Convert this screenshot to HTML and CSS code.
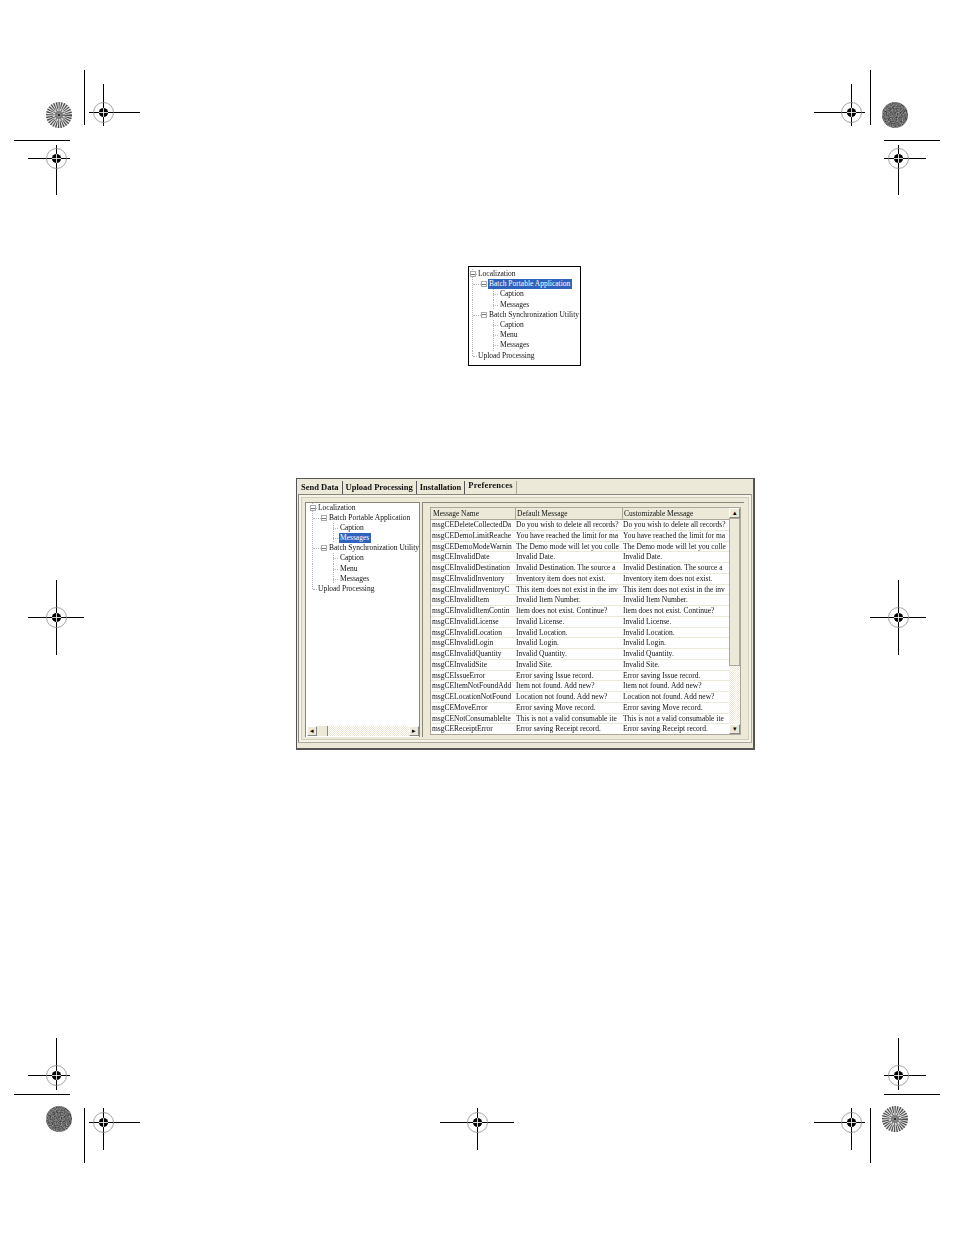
FILE: index.html
```html
<!DOCTYPE html>
<html lang="en">
<head>
<meta charset="utf-8">
<title>Localization preferences</title>
<link rel="stylesheet" href="styles.css">
</head>
<body>
<svg class="marks" width="954" height="1235" viewBox="0 0 954 1235" aria-hidden="true">
  <defs>
    <filter id="noise" x="0" y="0" width="100%" height="100%" color-interpolation-filters="sRGB">
      <feTurbulence type="fractalNoise" baseFrequency="0.8" numOctaves="2" seed="4"/>
      <feColorMatrix type="matrix" values="0.5 0.5 0 0 -0.08  0.5 0.5 0 0 -0.08  0.5 0.5 0 0 -0.08  0 0 0 0 1"/>
      <feComposite in2="SourceGraphic" operator="in"/>
    </filter>
    <g id="target">
      <circle r="10" fill="none" stroke="#8a8a8a" stroke-width="0.8"/>
      <circle r="4.6" fill="#000"/>
      <path d="M-4.6 0H4.6M0-4.6V4.6" stroke="#fff" stroke-width="0.8"/>
    </g>
    <g id="burst">
      <circle r="13" fill="#e2e2e2"/>
      <circle r="9.5" fill="none" stroke="#4a4a4a" stroke-width="7" stroke-dasharray="1.05 1.05"/>
      <circle r="4" fill="#8c8c8c"/>
      <circle r="4" fill="none" stroke="#666" stroke-width="4" stroke-dasharray="0.8 1.2"/>
      <circle r="1" fill="#111"/>
    </g>
    <g id="dark">
      <circle r="13" filter="url(#noise)" fill="#666"/>
    </g>
  </defs>
  <path class="line" d="M84.5 70V125M14 140.5H70M870.5 70V125M884 140.5H940M14 1094.5H70M84.5 1108V1163M884 1094.5H940M870.5 1108V1163"/>
  <path class="line" d="M89 112.5H140M103.5 84V126M28 158.5H70M56.5 145V195M814 112.5H865M851.5 84V126M884 158.5H926M898.5 145V195"/>
  <path class="line" d="M28 617.5H84M56.5 580V655M870 617.5H926M898.5 580V655"/>
  <path class="line" d="M28 1075.5H70M56.5 1038V1090M884 1075.5H926M898.5 1038V1090M89 1122.5H140M103.5 1108V1150M814 1122.5H865M851.5 1108V1150M440 1122.5H514M477.5 1108V1150"/>
  <use href="#target" x="103.5" y="112.5"/>
  <use href="#target" x="56.5" y="158.5"/>
  <use href="#target" x="851.5" y="112.5"/>
  <use href="#target" x="898.5" y="158.5"/>
  <use href="#target" x="56.5" y="617.5"/>
  <use href="#target" x="898.5" y="617.5"/>
  <use href="#target" x="56.5" y="1075.5"/>
  <use href="#target" x="898.5" y="1075.5"/>
  <use href="#target" x="103.5" y="1122.5"/>
  <use href="#target" x="851.5" y="1122.5"/>
  <use href="#target" x="477.5" y="1122.5"/>
  <use href="#burst" x="59" y="115"/>
  <use href="#dark" x="895" y="115"/>
  <use href="#dark" x="59" y="1119"/>
  <use href="#burst" x="895" y="1119"/>
</svg>

<main class="page">
  <figure class="tree-figure">
    <ul class="tree">
      <li class="l0 exp"><span>Localization</span></li>
      <li class="l1 exp"><span class="sel">Batch Portable Application</span></li>
      <li class="l2"><span>Caption</span></li>
      <li class="l2"><span>Messages</span></li>
      <li class="l1 exp"><span>Batch Synchronization Utility</span></li>
      <li class="l2"><span>Caption</span></li>
      <li class="l2"><span>Menu</span></li>
      <li class="l2"><span>Messages</span></li>
      <li class="l0"><span>Upload Processing</span></li>
    </ul>
  </figure>

  <figure class="window">
    <div class="tabs">
      <span class="tab">Send Data</span>
      <span class="tab">Upload Processing</span>
      <span class="tab">Installation</span>
      <span class="tab active">Preferences</span>
    </div>
    <div class="panel">
      <div class="tree-pane">
        <ul class="tree">
          <li class="l0 exp"><span>Localization</span></li>
          <li class="l1 exp"><span>Batch Portable Application</span></li>
          <li class="l2"><span>Caption</span></li>
          <li class="l2"><span class="sel">Messages</span></li>
          <li class="l1 exp"><span>Batch Synchronization Utility</span></li>
          <li class="l2"><span>Caption</span></li>
          <li class="l2"><span>Menu</span></li>
          <li class="l2"><span>Messages</span></li>
          <li class="l0"><span>Upload Processing</span></li>
        </ul>
        <div class="hscroll">
          <span class="btn">◂</span><span class="thumb"></span><span class="track"></span><span class="btn">▸</span>
        </div>
      </div>
      <div class="grid-pane">
        <div class="grid">
          <div class="table">
            <div class="row head"><span>Message Name</span><span>Default Message</span><span>Customizable Message</span></div>
            <div class="row"><span>msgCEDeleteCollectedDa</span><span>Do you wish to delete all records?</span><span>Do you wish to delete all records?</span></div>
            <div class="row"><span>msgCEDemoLimitReache</span><span>You have reached the limit for ma</span><span>You have reached the limit for ma</span></div>
            <div class="row"><span>msgCEDemoModeWarnin</span><span>The Demo mode will let you colle</span><span>The Demo mode will let you colle</span></div>
            <div class="row"><span>msgCEInvalidDate</span><span>Invalid Date.</span><span>Invalid Date.</span></div>
            <div class="row"><span>msgCEInvalidDestination</span><span>Invalid Destination. The source a</span><span>Invalid Destination. The source a</span></div>
            <div class="row"><span>msgCEInvalidInventory</span><span>Inventory item does not exist.</span><span>Inventory item does not exist.</span></div>
            <div class="row"><span>msgCEInvalidInventoryC</span><span>This item does not exist in the inv</span><span>This item does not exist in the inv</span></div>
            <div class="row"><span>msgCEInvalidItem</span><span>Invalid Item Number.</span><span>Invalid Item Number.</span></div>
            <div class="row"><span>msgCEInvalidItemContin</span><span>Item does not exist. Continue?</span><span>Item does not exist. Continue?</span></div>
            <div class="row"><span>msgCEInvalidLicense</span><span>Invalid License.</span><span>Invalid License.</span></div>
            <div class="row"><span>msgCEInvalidLocation</span><span>Invalid Location.</span><span>Invalid Location.</span></div>
            <div class="row"><span>msgCEInvalidLogin</span><span>Invalid Login.</span><span>Invalid Login.</span></div>
            <div class="row"><span>msgCEInvalidQuantity</span><span>Invalid Quantity.</span><span>Invalid Quantity.</span></div>
            <div class="row"><span>msgCEInvalidSite</span><span>Invalid Site.</span><span>Invalid Site.</span></div>
            <div class="row"><span>msgCEIssueError</span><span>Error saving Issue record.</span><span>Error saving Issue record.</span></div>
            <div class="row"><span>msgCEItemNotFoundAdd</span><span>Item not found. Add new?</span><span>Item not found. Add new?</span></div>
            <div class="row"><span>msgCELocationNotFound</span><span>Location not found. Add new?</span><span>Location not found. Add new?</span></div>
            <div class="row"><span>msgCEMoveError</span><span>Error saving Move record.</span><span>Error saving Move record.</span></div>
            <div class="row"><span>msgCENotConsumableIte</span><span>This is not a valid consumable ite</span><span>This is not a valid consumable ite</span></div>
            <div class="row"><span>msgCEReceiptError</span><span>Error saving Receipt record.</span><span>Error saving Receipt record.</span></div>
          </div>
          <div class="vscroll">
            <span class="btn">▴</span><span class="vthumb"></span><span class="vtrack"></span><span class="btn">▾</span>
          </div>
        </div>
      </div>
    </div>
  </figure>
</main>
</body>
</html>
```

FILE: styles.css
```css
html, body { margin: 0; padding: 0; background: #fff; }
body { width: 954px; height: 1235px; overflow: hidden; position: relative; font-family: "Liberation Serif", serif; color: #111; }

.marks { position: absolute; left: 0; top: 0; }
.line { stroke: #000; stroke-width: 1; fill: none; }

.page { display: flex; flex-direction: column; padding-top: 266px; }
figure { margin: 0; box-sizing: border-box; }

.tree { --pitch: 10.2px; list-style: none; margin: 0; padding: 0; font-size: 7.5px; line-height: var(--pitch); filter: blur(0.4px); }
.tree li { position: relative; white-space: nowrap; height: var(--pitch); background: linear-gradient(#b5b5b5 50%, transparent 50%) 5px 0 / 1px 2px repeat-y; }
.tree li.l0 { padding-left: 10px; }
.tree li.l1 { padding-left: 21px; }
.tree li.l2 { padding-left: 32px; background: linear-gradient(#b5b5b5 50%, transparent 50%) 5px 0 / 1px 2px repeat-y, linear-gradient(#b5b5b5 50%, transparent 50%) 26px 0 / 1px 2px repeat-y; }
.tree li.l0:last-child { background: none; }
.tree li span { position: relative; padding: 0 1px; }
.tree li .sel { display: inline-block; height: 10px; line-height: 10px; padding: 0 2px 0 1px; background: #2f62bd; color: #fff; }
.tree li::before { content: ""; position: absolute; top: 5px; height: 0; border-top: 1px dotted #b5b5b5; }
.tree li.l0::before { left: 6px; width: 4px; }
.tree li.l1::before { left: 6px; width: 8px; }
.tree li.l2::before { left: 26px; width: 5px; }
.tree li.l0:last-child::after { content: ""; position: absolute; left: 5px; top: 0; height: 5px; border-left: 1px dotted #b5b5b5; }
.tree li.exp::after { content: ""; position: absolute; top: 2px; width: 6px; height: 6px; box-sizing: border-box; border: 1px solid #aaa; background: linear-gradient(#777, #777) center / 4px 1px no-repeat #fff; }
.tree li.l0.exp::after { left: 3px; }
.tree li.l1.exp::after { left: 14px; }

.tree-figure { align-self: flex-start; margin-left: 468px; width: 113px; height: 100px; border: 1px solid #000; padding: 2px 0 0 1px; background: #fff; }
.tree-figure .tree { margin-left: -3px; }

.window { align-self: flex-start; margin-left: 296px; margin-top: 112px; width: 459px; height: 272px; background: #ece9d8; border: 1px solid #555; border-right-width: 2px; border-bottom-width: 2px; padding: 2px 0 0 1px; display: flex; flex-direction: column; }

.tabs { display: flex; height: 13px; font-size: 8.5px; font-weight: bold; line-height: 13px; filter: blur(0.4px); }
.tab { padding: 0 3px; border-right: 1px solid #555; white-space: nowrap; }
.tab.active { padding: 0 3px; line-height: 9px; border-right: 1px solid #aca899; letter-spacing: 0.2px; }

.panel { flex: none; width: 454px; height: 249px; padding: 7px 0 0 6px; display: flex; gap: 2px; border: 1px solid #aca899; border-top-color: #8a8778; border-left-color: #8a8778; box-sizing: border-box; box-shadow: inset 0 0 0 2px #f6f4ea, inset 0 0 0 3px #d0cdb9; }

.tree-pane { width: 115px; height: 235px; background: #fff; border: 1px solid #8a8778; border-bottom: 0; box-sizing: border-box; position: relative; display: flex; flex-direction: column; justify-content: space-between; padding: 0 0 1px 1px; }
.tree-pane .tree { --pitch: 10.1px; }
.hscroll { display: flex; height: 10px; background: repeating-conic-gradient(#fff 0 25%, #ece9d8 0 50%) 0 0 / 2px 2px; }
.hscroll .btn, .vscroll .btn { flex: none; width: 10px; height: 10px; background: #ece9d8; border: 1px solid #888; border-top-color: #fff; border-left-color: #fff; box-sizing: border-box; font-size: 7px; line-height: 8px; text-align: center; color: #000; overflow: hidden; }
.thumb { width: 10px; background: #ece9d8; border-right: 1px solid #888; }
.track { flex: 1; }

.grid-pane { flex: none; width: 322px; height: 235px; border-left: 1px solid #8a8778; border-top: 1px solid #8a8778; box-sizing: border-box; padding: 4px 0 0 7px; }
.grid { display: flex; width: 311px; height: 228px; background: #fff; border: 1px solid #aca899; box-sizing: border-box; }
.table { width: 298px; overflow: hidden; }
.row { display: grid; grid-template-columns: 84px 107px 107px; height: 10.75px; line-height: 10px; font-size: 7.5px; border-bottom: 1px solid #ece9d8; box-sizing: border-box; }
.row span { overflow: hidden; white-space: nowrap; padding-left: 1px; filter: blur(0.4px); }
.row.head { height: 12px; line-height: 11px; background: #ece9d8; border-bottom: 1px solid #aca899; }
.row.head span { padding-left: 2px; box-shadow: 1px 0 0 #aca899; }
.vscroll { flex: 1; display: flex; flex-direction: column; }
.vscroll .btn { width: 100%; }
.vthumb { height: 148px; background: #ece9d8; border: 1px solid #aca899; box-sizing: border-box; }
.vtrack { flex: 1; background: repeating-conic-gradient(#fff 0 25%, #ece9d8 0 50%) 0 0 / 2px 2px; }
```
